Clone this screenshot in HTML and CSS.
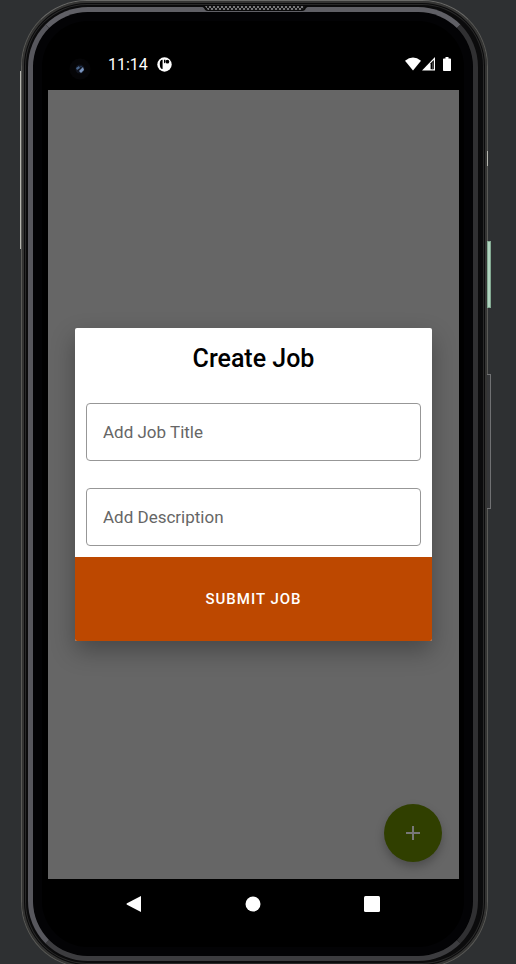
FILE: index.html
```html
<!DOCTYPE html>
<html lang="en">
<head>
<meta charset="utf-8">
<meta name="viewport" content="width=device-width, initial-scale=1">
<title>Create Job</title>
<link rel="stylesheet" href="styles.css">
</head>
<body>
<div class="phone">
  <span class="antenna antenna-left"></span>
  <span class="antenna antenna-right"></span>
  <span class="power-key"></span>
  <span class="volume-key"></span>
  <svg class="speaker" viewBox="0 0 108 6" aria-hidden="true">
    <defs>
      <pattern id="mesh" width="4" height="4" patternUnits="userSpaceOnUse">
        <rect width="4" height="4" fill="#161616"/>
        <rect width="2" height="2" fill="#77777a"/>
        <rect x="2" y="2" width="2" height="2" fill="#77777a"/>
      </pattern>
    </defs>
    <path d="M0 0H108L105 2Q104 5 101 5H7Q4 5 3 2Z" fill="#0a0a0a"/>
    <path d="M4 0H104L101 4H7Z" fill="url(#mesh)"/>
  </svg>
  <div class="bezel">
    <div class="display">
      <header class="status-bar">
        <svg class="camera" viewBox="0 0 22 22" aria-hidden="true">
          <circle cx="11" cy="11" r="10.5" fill="#050507"/>
          <circle cx="11" cy="11" r="4.5" fill="#10141f"/>
          <path d="M7 10L10 8L11 10L8 12Z" fill="#48658c"/>
          <path d="M10 13L14 9L15 12L12 15Z" fill="#7893bd"/>
          <path d="M11 8L13 8L12 10Z" fill="#263c60"/>
        </svg>
        <time class="clock">11:14</time>
        <svg class="notice" viewBox="0 0 15 15" aria-hidden="true">
          <circle cx="7.5" cy="7.5" r="7.2" fill="#fff"/>
          <path d="M5.6 2.8C3.4 2.8 2.7 4.8 2.8 7.2C2.9 10 3.6 12 5.6 12Z" fill="#000"/>
          <path d="M7 2.8H8.4V5.2L7 6.4Z" fill="#000"/>
          <circle cx="10.4" cy="4.7" r="1.9" fill="#000"/>
        </svg>
        <div class="system-icons">
          <svg class="wifi" viewBox="0 0 16 14" aria-hidden="true">
            <path d="M0 3.7Q8 -2.9 16 3.7L8 13.5Z" fill="#fff"/>
          </svg>
          <svg class="signal" viewBox="0 0 13 14" aria-hidden="true">
            <path d="M0 13.5L13 0V13.5Z" fill="#fff"/>
            <path d="M8.6 6.3L11.8 3V12.3H8.6Z" fill="#000"/>
            <path d="M10.2 5.5H11V12.3H10.2Z" fill="#555"/>
          </svg>
          <svg class="battery" viewBox="0 0 8 14" aria-hidden="true">
            <path d="M2.5 0H5.5V1.4H7.2Q8 1.4 8 2.2V13.2Q8 14 7.2 14H.8Q0 14 0 13.2V2.2Q0 1.4 .8 1.4H2.5Z" fill="#fff"/>
          </svg>
        </div>
      </header>
      <main class="app">
        <button class="fab" type="button" aria-label="Add job">
          <svg viewBox="0 0 16 16" aria-hidden="true"><path d="M8 1V15M1 8H15" stroke="#777" stroke-width="2"/></svg>
        </button>
        <form class="dialog" role="dialog" aria-labelledby="dialog-title">
          <h1 class="dialog-title" id="dialog-title">Create Job</h1>
          <div class="fields">
            <input class="field" type="text" placeholder="Add Job Title" aria-label="Add Job Title">
            <input class="field" type="text" placeholder="Add Description" aria-label="Add Description">
          </div>
          <button class="submit" type="button">SUBMIT JOB</button>
        </form>
      </main>
      <nav class="nav-bar" aria-label="System navigation">
        <button class="nav-key" type="button" aria-label="Back">
          <svg viewBox="0 0 18 18" aria-hidden="true"><path d="M16 1V17L2 9.8Q.8 9 2 8.2Z" fill="#fff"/></svg>
        </button>
        <button class="nav-key" type="button" aria-label="Home">
          <svg viewBox="0 0 18 18" aria-hidden="true"><circle cx="9" cy="9" r="7.5" fill="#fff"/></svg>
        </button>
        <button class="nav-key" type="button" aria-label="Recent apps">
          <svg viewBox="0 0 18 18" aria-hidden="true"><rect x="1" y="1" width="16" height="16" rx="1.5" fill="#fff"/></svg>
        </button>
      </nav>
    </div>
  </div>
</div>
</body>
</html>
```
FILE: styles.css
```css
* {
  box-sizing: border-box;
}

body {
  margin: 0;
  height: 100vh;
  overflow: hidden;
  background: #2e3032;
  font-family: Roboto, "Liberation Sans", sans-serif;
}

button {
  padding: 0;
  border: 0;
  font-family: inherit;
}

svg {
  display: block;
}

.phone {
  position: relative;
  display: flex;
  height: calc(100vh + 4px);
  margin: 0 28px 0 21px;
  padding: 6px 9px 6px 6px;
  border: 1px solid #5a5a57;
  border-top-color: #6a6a68;
  border-radius: 66px;
  background: #0b0b0c;
  box-shadow: inset 0 0 0 2px #343433, inset 0 0 0 3px #0b0b0c, inset 0 0 0 4px #292929;
}

.bezel {
  flex: 1;
  display: flex;
  padding: 0 14px 0 15px;
  border: 5px solid;
  border-color: #606066 #303032 #3c3c3f #57575d;
  border-radius: 60px;
  background: #000;
  box-shadow: inset 0 0 0 9px #030305;
}

.display {
  flex: 1;
  display: flex;
  flex-direction: column;
  min-width: 0;
}

.antenna {
  position: absolute;
  width: 1px;
  background: #b5b5ae;
}

.antenna-left {
  top: 70px;
  left: -2px;
  height: 178px;
}

.antenna-right {
  top: 150px;
  right: -1px;
  height: 15px;
}

.power-key {
  position: absolute;
  top: 240px;
  right: -4px;
  width: 4px;
  height: 67px;
  border: 1px solid #83a992;
  background: #b0d3bf;
}

.volume-key {
  position: absolute;
  top: 373px;
  right: -4px;
  width: 4px;
  height: 135px;
  border: 1px solid #707173;
  border-left: 0;
  background: #353638;
}

.speaker {
  position: absolute;
  top: 5px;
  left: 50%;
  width: 108px;
  height: 6px;
  transform: translateX(-50%);
}

.status-bar {
  display: flex;
  align-items: center;
  height: 78px;
  padding: 26px 8px 0 21px;
  color: #fff;
}

.camera {
  width: 22px;
  height: 22px;
  margin-top: 10px;
}

.clock {
  margin-left: 17px;
  padding-top: 2px;
  font-size: 16px;
  line-height: 20px;
}

.notice {
  width: 15px;
  height: 15px;
  margin-left: 9px;
}

.system-icons {
  display: flex;
  margin-left: auto;
}

.wifi {
  width: 16px;
  height: 14px;
}

.signal {
  width: 13px;
  height: 14px;
  margin: 0 8px 0 1px;
}

.battery {
  width: 8px;
  height: 14px;
}

.app {
  position: relative;
  flex: 1;
  display: flex;
  flex-direction: column;
  justify-content: center;
  padding: 0 27px;
  background: #666;
}

.fab {
  position: absolute;
  right: 17px;
  bottom: 17px;
  display: grid;
  place-items: center;
  width: 58px;
  height: 58px;
  border-radius: 50%;
  background: #303f00;
  box-shadow: 0 5px 10px rgba(0, 0, 0, 0.25);
}

.fab svg {
  width: 16px;
  height: 16px;
}

.dialog {
  position: relative;
  display: flex;
  flex-direction: column;
  border-radius: 2px;
  overflow: hidden;
  background: #fff;
  box-shadow: 0 10px 24px rgba(0, 0, 0, 0.3);
}

.dialog-title {
  margin: 0;
  padding: 15px 0 28px;
  font-size: 25px;
  line-height: 32px;
  font-weight: 500;
  text-align: center;
  color: #000;
}

.fields {
  display: grid;
  gap: 27px;
  padding: 0 11px 11px;
}

.field {
  width: 100%;
  height: 58px;
  padding: 0 16px;
  border: 1px solid #979797;
  border-radius: 4px;
  background: #fff;
  font-family: inherit;
  font-size: 17px;
  color: #000;
}

.field::placeholder {
  color: #666;
  opacity: 1;
}

.submit {
  height: 84px;
  background: #bd4800;
  color: #fff;
  font-size: 15px;
  font-weight: 500;
  letter-spacing: 1px;
}

.nav-bar {
  display: flex;
  justify-content: space-between;
  height: 77px;
  padding: 16px 78px 0 77px;
}

.nav-key {
  width: 18px;
  height: 18px;
  background: none;
}

.nav-key svg {
  width: 18px;
  height: 18px;
}
```
